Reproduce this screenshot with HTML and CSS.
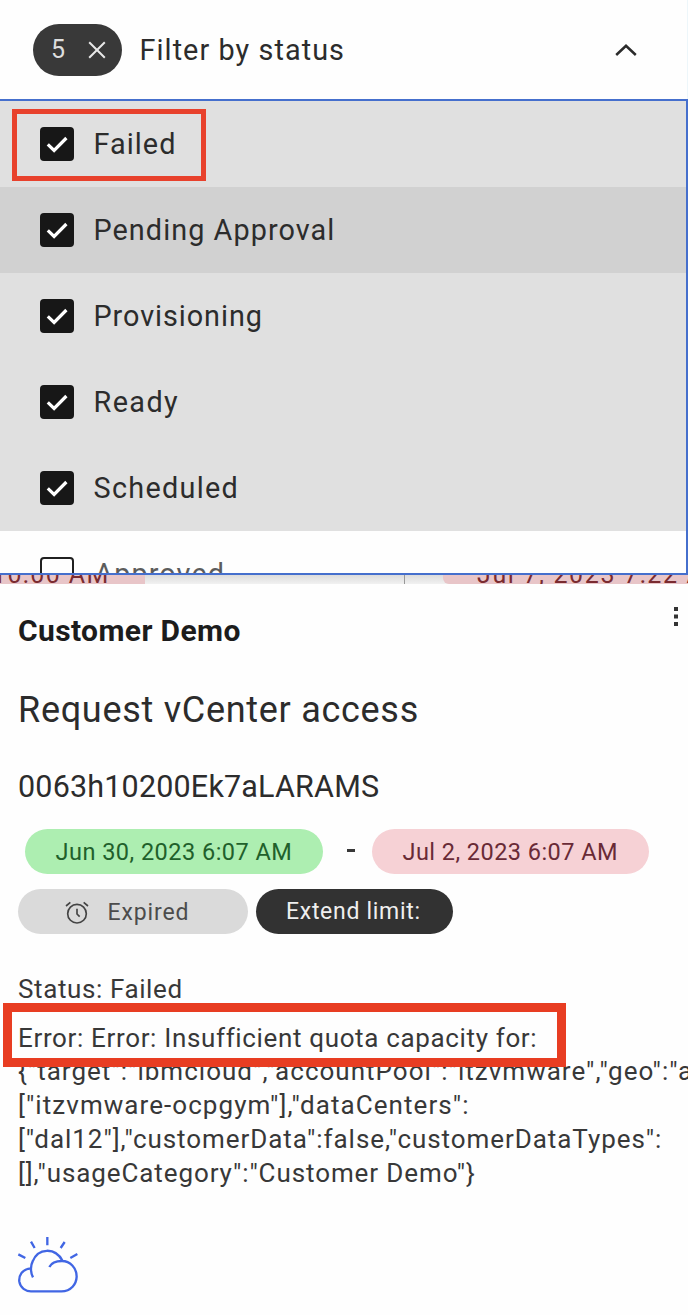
FILE: index.html
```html
<!DOCTYPE html>
<html lang="en">
<head>
<meta charset="utf-8">
<title>Reservations</title>
<link rel="stylesheet" href="styles.css">
</head>
<body>
<main class="page">
  <header class="filter">
    <div class="filter-count">
      <span class="count">5</span>
      <svg class="clear" viewBox="0 0 18 18"><path d="M1.2 1.2 16.8 16.8M16.8 1.2 1.2 16.8"/></svg>
    </div>
    <span class="filter-label">Filter by status</span>
    <svg class="chevron" viewBox="0 0 22 12"><path d="M1.2 11 11 1.8 20.8 11"/></svg>
  </header>

  <section class="menu">
    <div class="option"><span class="box checked"><svg viewBox="0 0 34 34"><path d="M7.8 17.3 14.1 23.4 26.4 11"/></svg></span><span class="opt-label failed">Failed</span></div>
    <div class="option hover"><span class="box checked"><svg viewBox="0 0 34 34"><path d="M7.8 17.3 14.1 23.4 26.4 11"/></svg></span><span class="opt-label">Pending Approval</span></div>
    <div class="option"><span class="box checked"><svg viewBox="0 0 34 34"><path d="M7.8 17.3 14.1 23.4 26.4 11"/></svg></span><span class="opt-label provisioning">Provisioning</span></div>
    <div class="option"><span class="box checked"><svg viewBox="0 0 34 34"><path d="M7.8 17.3 14.1 23.4 26.4 11"/></svg></span><span class="opt-label ready">Ready</span></div>
    <div class="option"><span class="box checked"><svg viewBox="0 0 34 34"><path d="M7.8 17.3 14.1 23.4 26.4 11"/></svg></span><span class="opt-label scheduled">Scheduled</span></div>
    <div class="option unselected"><span class="box"></span><span class="opt-label approved">Approved</span></div>
  </section>

  <div class="behind">
    <div class="behind-left"><span class="behind-date first">10:00 AM</span></div>
    <div class="behind-right"><span class="behind-date second">Jul 7, 2023 7:22 AM</span></div>
  </div>

  <article class="card">
    <div class="card-head">
      <h2 class="title">Customer Demo</h2>
      <svg class="kebab" viewBox="0 0 4 19"><path d="M0 0h4v4H0zM0 7.5h4v4H0zM0 15h4v4H0z"/></svg>
    </div>
    <h3 class="subtitle">Request vCenter access</h3>
    <p class="ident">0063h10200Ek7aLARAMS</p>
    <div class="dates">
      <span class="pill start">Jun 30, 2023 6:07 AM</span>
      <span class="dash"></span>
      <span class="pill end">Jul 2, 2023 6:07 AM</span>
    </div>
    <div class="actions">
      <span class="pill expired">
        <svg class="alarm" viewBox="196 427 72 70"><circle cx="232" cy="465" r="28"/><path d="M232 450v16l8 8M199 442l13-11M252 431l13 11"/></svg>
        Expired
      </span>
      <span class="pill extend">Extend limit:</span>
    </div>
    <p class="status">Status: Failed</p>
    <p class="error">Error: Error: Insufficient quota capacity for:</p>
    <div class="details">
      <p class="line l1">{"target":"ibmcloud","accountPool":"itzvmware","geo":"a</p>
      <p class="line l2">["itzvmware-ocpgym"],"dataCenters":</p>
      <p class="line l3">["dal12"],"customerData":false,"customerDataTypes":</p>
      <p class="line l4">[],"usageCategory":"Customer Demo"}</p>
    </div>
    <svg class="cloud" viewBox="50 60 186 176"><path d="M98 187C90 172 90 152 97 139C113 99 164 95 187 138M92 160C64 162 55 183 57 200C60 219 76 229 92 229H183C213 229 228 207 229 185C229 158 209 138 185 138C166 138 152 146 147 156M141 66V91M92 80 103 99M193 81 181 99M54 118 75 129M231 117 210 129"/></svg>
  </article>

  <div class="mark mark-failed"></div>
  <div class="mark mark-error"></div>
</main>
</body>
</html>
```
FILE: styles.css
```css
* { box-sizing: border-box; }
body { margin: 0; background: #fff; }
h2, h3, p { margin: 0; font-weight: 400; }
svg { display: block; flex: none; }
svg path, svg circle { fill: none; stroke-linejoin: miter; }

.page {
  position: relative;
  width: 688px;
  height: 1315px;
  overflow: hidden;
  background: #fefefe;
  color: #2c2c2c;
  font-family: Roboto, "Liberation Sans", sans-serif;
  white-space: nowrap;
}

/* Filter header */
.filter {
  display: flex;
  align-items: center;
  height: 99px;
  padding: 0 50px 0 33px;
  border-right: 1px solid #edf6fa;
}
.filter-count {
  display: flex;
  align-items: center;
  justify-content: space-between;
  width: 89px;
  height: 52px;
  padding: 0 16px 0 18px;
  border-radius: 26px;
  background: #393939;
}
.count { color: #dedede; font-size: 25px; line-height: 30px; padding-top: 1px; }
.clear { width: 18px; height: 18px; }
.clear path { stroke: #e8e8e8; stroke-width: 2; }
.filter-label {
  flex: 1;
  margin-left: 17.5px;
  padding-top: 1px;
  font-size: 28.8px;
  line-height: 40px;
  letter-spacing: 1.07px;
}
.chevron { width: 22px; height: 12px; }
.chevron path { stroke: #2b2b2b; stroke-width: 2.5; }

/* Option menu */
.menu {
  height: 476px;
  overflow: hidden;
  border: solid #456fcd;
  border-width: 2px 2px 2px 0;
  background: #fff;
}
.option {
  display: flex;
  align-items: center;
  gap: 19.5px;
  height: 86px;
  padding-left: 40px;
  background: #e0e0e0;
}
.hover { background: #d1d1d1; }
.unselected { background: #fefefe; }
.box {
  width: 34px;
  height: 34px;
  border: 2px solid #202020;
  border-radius: 4px;
}
.checked { border: 0; background: #171717; }
.checked path { stroke: #fff; stroke-width: 3.2; }
.opt-label {
  font-size: 28.8px;
  line-height: 40px;
  letter-spacing: 1.06px;
}
.failed { letter-spacing: 1.05px; }
.provisioning { letter-spacing: .94px; }
.ready { letter-spacing: 1.4px; }
.scheduled { letter-spacing: 1.29px; }
.approved { margin-left: 1px; letter-spacing: 1.05px; color: #5c5c5c; }

/* Slice of the cards that shows under the menu */
.behind {
  display: flex;
  justify-content: space-between;
  height: 9px;
  overflow: hidden;
  background: linear-gradient(#dcdcdc, #f1f1f1);
}
.behind-left, .behind-right {
  display: flex;
  align-items: flex-end;
  height: 9px;
  min-width: 0;
  color: #7a2b30;
}
.behind-left { flex: 0 0 405px; border-right: 1.5px solid #989898; }
.behind-right { flex: 0 0 245px; background: #e8c5c8; border-radius: 0 0 0 6px; padding-left: 34px; }
.behind-date { font-size: 25px; line-height: 19px; }
.first { width: 145px; background: #e8c5c8; letter-spacing: 1.38px; text-indent: -8px; }
.second { letter-spacing: 1.63px; }

/* Reservation card */
.card { padding: 22px 0 0 18px; }
.card-head {
  display: flex;
  justify-content: space-between;
  padding-right: 10.5px;
}
.title {
  margin-top: 5px;
  color: #1c1c1c;
  font-size: 30px;
  font-weight: 700;
  line-height: 40px;
  letter-spacing: .38px;
}
.kebab { width: 4px; height: 19px; margin-top: .5px; }
.kebab path { fill: #333; }
.subtitle {
  margin-top: 35px;
  font-size: 36px;
  line-height: 48px;
  letter-spacing: .71px;
}
.ident {
  margin-top: 33px;
  font-size: 30.5px;
  line-height: 40px;
  letter-spacing: .18px;
}
.dates { display: flex; align-items: center; margin: 22px 0 0 7px; }
.actions { display: flex; gap: 8px; margin-top: 15px; }
.pill {
  display: flex;
  align-items: center;
  height: 45px;
  border-radius: 22.5px;
  font-size: 23.5px;
}
.start { width: 298px; padding-left: 30.5px; background: #adeeb1; color: #21602b; letter-spacing: .48px; }
.end { width: 277px; padding-left: 30.5px; background: #f6d1d5; color: #692a36; letter-spacing: .46px; }
.dash { width: 8px; height: 3px; margin: 0 17px 3px 24px; background: #383838; }
.expired {
  gap: 18.5px;
  width: 230px;
  padding: 2px 0 0 47px;
  background: #dadada;
  color: #4c4c4c;
  font-size: 23px;
  letter-spacing: .87px;
}
.alarm { width: 24px; height: 23.3px; }
.alarm path, .alarm circle { stroke: #444; stroke-width: 5; }
.extend {
  width: 196.5px;
  padding: 0 0 1px 30px;
  background: #323232;
  color: #efefef;
  font-size: 23px;
  letter-spacing: .7px;
}
.status {
  margin-top: 38px;
  color: #383838;
  font-size: 26px;
  line-height: 34px;
  letter-spacing: .6px;
}
.error {
  margin-top: 15px;
  color: #383838;
  font-size: 26px;
  line-height: 34px;
  letter-spacing: .65px;
}
.details { padding-top: .4px; color: #383838; font-size: 26px; line-height: 33.7px; }
.l1 { letter-spacing: 1.02px; }
.l2 { letter-spacing: 1.06px; }
.l3 { letter-spacing: .94px; }
.l4 { letter-spacing: .9px; }
.cloud { width: 62px; height: 58.7px; margin: 44.6px 0 0 -1.3px; }
.cloud path { stroke: #4166e4; stroke-width: 7; }

/* Red highlight frames laid over the content */
.mark { position: absolute; border: 5px solid #e8412c; }
.mark-failed { left: 12px; top: 109px; width: 194px; height: 72px; }
.mark-error { left: 3px; top: 1003px; width: 563px; height: 64px; border-width: 9px; border-color: #e83d22; }
```
